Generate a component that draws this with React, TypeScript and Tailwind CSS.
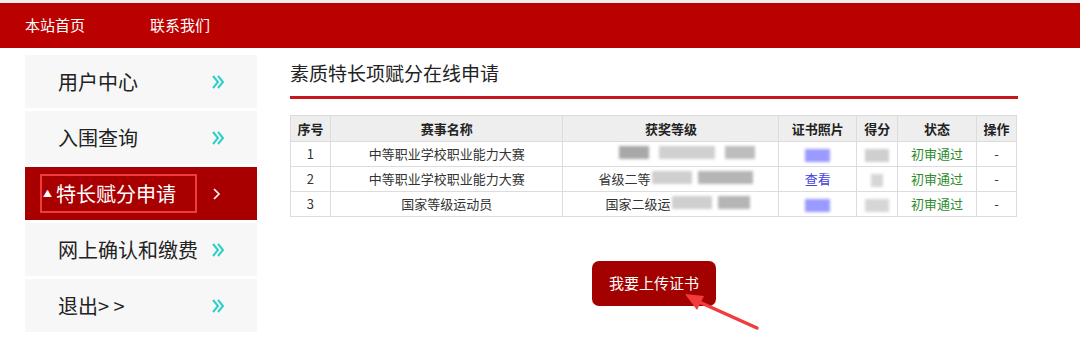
import type { ReactNode } from "react";

const font = { fontFamily: '"Noto Sans CJK SC", "Noto Sans", sans-serif' };

function Blur({ w, shade = "bg-[#c9c9c9]" }: { w: number; shade?: string }) {
  return (
    <span
      className={`inline-block h-[13px] align-middle blur-[1.5px] ${shade}`}
      style={{ width: w }}
    />
  );
}

function Chevrons() {
  return (
    <svg width="14" height="16" viewBox="0 0 14 16" fill="none" stroke="#2ad0c8" strokeWidth="2">
      <path d="M2 2l5 6-5 6" />
      <path d="M7 2l5 6-5 6" />
    </svg>
  );
}

function NavItem({ label, active }: { label: string; active?: boolean }) {
  if (active) {
    return (
      <div className="flex h-[53px] items-center bg-[#a80000] pl-[15px] pr-[35px]">
        <div className="flex h-[39px] w-[157px] items-center border-2 border-[#f03c3c] pl-[1px]">
          <span className="mr-[4px] text-[9px] leading-none text-white">▲</span>
          <span className="text-[20px] text-white">{label}</span>
        </div>
        <svg className="ml-auto" width="10" height="14" viewBox="0 0 10 14" fill="none" stroke="white" strokeWidth="1.6">
          <path d="M2 2l5 5-5 5" />
        </svg>
      </div>
    );
  }
  return (
    <div className="flex h-[53px] items-center bg-[#f7f7f7] pl-[33px] pr-[32px]">
      <span className="text-[20px] text-[#222]">{label}</span>
      <span className="ml-auto">
        <Chevrons />
      </span>
    </div>
  );
}

function Td({
  children,
  align = "text-center",
  color = "text-[#333]",
}: {
  children?: ReactNode;
  align?: string;
  color?: string;
}) {
  return (
    <td className={`h-[25px] border border-[#dcdcdc] p-0 text-[13px] ${align} ${color}`}>
      {children}
    </td>
  );
}

function Th({ children, w }: { children: ReactNode; w: number }) {
  return (
    <th
      className="h-[26px] border border-[#dcdcdc] bg-[#eeeeee] p-0 text-center text-[13px] font-bold text-[#222]"
      style={{ width: w }}
    >
      {children}
    </th>
  );
}

const green = "text-[#2e8b2e]";

export default function App() {
  return (
    <div className="relative h-[354px] w-[1080px] overflow-hidden bg-white" style={font}>
      <div className="h-[3px] bg-[#eeeeee]" />
      <div className="flex h-[45px] items-center gap-[65px] bg-[#bb0000] pl-[25px] text-[15px] text-white">
        <span>本站首页</span>
        <span>联系我们</span>
      </div>

      <div className="flex gap-[33px] pl-[25px] pt-[7px]">
        <div className="flex w-[232px] flex-col gap-[3px]">
          <NavItem label="用户中心" />
          <NavItem label="入围查询" />
          <NavItem label="特长赋分申请" active />
          <NavItem label="网上确认和缴费" />
          <NavItem label="退出> >" />
        </div>

        <div className="w-[728px]">
          <div className="pt-[4px] text-[19px] leading-[28px] text-[#222]">素质特长项赋分在线申请</div>
          <div className="mt-[9px] h-[3px] bg-[#c8161e]" />

          <table className="mt-[16px] w-[727px] border-collapse">
            <thead>
              <tr>
                <Th w={40}>序号</Th>
                <Th w={233}>赛事名称</Th>
                <Th w={216}>获奖等级</Th>
                <Th w={78}>证书照片</Th>
                <Th w={41}>得分</Th>
                <Th w={79}>状态</Th>
                <Th w={40}>操作</Th>
              </tr>
            </thead>
            <tbody>
              <tr>
                <Td>1</Td>
                <Td>中等职业学校职业能力大赛</Td>
                <Td align="text-left">
                  <span className="ml-[56px] inline-flex gap-[10px]">
                    <Blur w={30} shade="bg-[#a8a8a8]" />
                    <Blur w={56} shade="bg-[#d0d0d0]" />
                    <Blur w={30} shade="bg-[#bdbdbd]" />
                  </span>
                </Td>
                <Td><Blur w={25} shade="bg-[#9a9aff]" /></Td>
                <Td><Blur w={24} shade="bg-[#cfcfcf]" /></Td>
                <Td color={green}>初审通过</Td>
                <Td>-</Td>
              </tr>
              <tr>
                <Td>2</Td>
                <Td>中等职业学校职业能力大赛</Td>
                <Td align="text-left">
                  <span className="ml-[35px]">省级二等</span>
                  <span className="ml-[2px] inline-flex gap-[6px]">
                    <Blur w={40} shade="bg-[#cfcfcf]" />
                    <Blur w={55} shade="bg-[#b5b5b5]" />
                  </span>
                </Td>
                <Td color="text-[#4343e0]">查看</Td>
                <Td><Blur w={12} shade="bg-[#d6d6d6]" /></Td>
                <Td color={green}>初审通过</Td>
                <Td>-</Td>
              </tr>
              <tr>
                <Td>3</Td>
                <Td>国家等级运动员</Td>
                <Td align="text-left">
                  <span className="ml-[42px]">国家二级运</span>
                  <span className="ml-[2px] inline-flex gap-[6px]">
                    <Blur w={40} shade="bg-[#cfcfcf]" />
                    <Blur w={32} shade="bg-[#b5b5b5]" />
                  </span>
                </Td>
                <Td><Blur w={25} shade="bg-[#9a9aff]" /></Td>
                <Td><Blur w={24} shade="bg-[#d6d6d6]" /></Td>
                <Td color={green}>初审通过</Td>
                <Td>-</Td>
              </tr>
            </tbody>
          </table>

          <div className="mt-[44px] flex justify-center">
            <button className="h-[45px] w-[124px] rounded-[7px] bg-[#a30000] text-[15px] text-white">
              我要上传证书
            </button>
          </div>
        </div>
      </div>

      <svg className="absolute left-0 top-0" width="1080" height="354" viewBox="0 0 1080 354">
        <line x1="757" y1="328" x2="697" y2="301" stroke="#f03c3c" strokeWidth="3.5" strokeLinecap="round" />
        <polygon points="685,294 704,296 697,310" fill="#f03c3c" />
      </svg>
    </div>
  );
}
